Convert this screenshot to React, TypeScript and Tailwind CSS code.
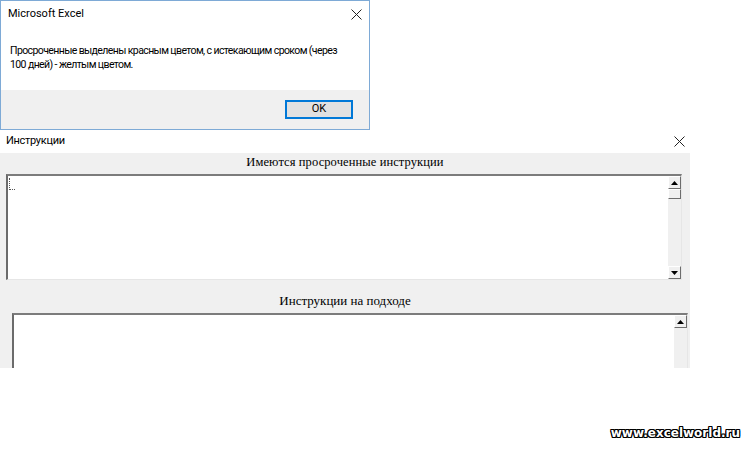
import React from "react";

function CloseIcon({ className }: { className?: string }) {
  return (
    <svg width="11" height="11" viewBox="0 0 11 11" className={className}>
      <path d="M0.5 0.5L10.5 10.5M10.5 0.5L0.5 10.5" stroke="#222" strokeWidth="1" fill="none" />
    </svg>
  );
}

function ScrollButton({ dir }: { dir: "up" | "down" }) {
  return (
    <div className="flex h-[13px] w-[13px] items-center justify-center border-t border-l border-t-white border-l-white border-r border-b border-r-[#6d6d6d] border-b-[#6d6d6d] bg-[#f0f0f0]">
      <svg width="7" height="4" viewBox="0 0 7 4">
        {dir === "up" ? <path d="M0 4L3.5 0L7 4Z" fill="#000" /> : <path d="M0 0L3.5 4L7 0Z" fill="#000" />}
      </svg>
    </div>
  );
}

function ListBox({ height, thumb, className }: { height: string; thumb: boolean; className: string }) {
  return (
    <div className={`flex shrink-0 border-t-2 border-l-2 border-t-[#7c7c7c] border-l-[#6b6b6b] border-r border-b border-r-[#e6e6e6] border-b-[#e6e6e6] bg-white ${height} ${className}`}>
      <div className="relative flex-1">
        {thumb && (
          <div className="absolute left-[1px] top-[2px] h-[12px] w-[6px] border-l border-b border-dotted border-[#555]" />
        )}
      </div>
      <div className="flex w-[13px] flex-col justify-between bg-[#f0f0f0]">
        <div className="flex flex-col">
          <ScrollButton dir="up" />
          {thumb && (
            <div className="h-[10px] w-[13px] border-t border-l border-t-white border-l-white border-r border-b border-r-[#6d6d6d] border-b-[#6d6d6d] bg-[#f0f0f0]" />
          )}
        </div>
        {thumb && <ScrollButton dir="down" />}
      </div>
    </div>
  );
}

export default function App() {
  return (
    <div className="relative h-[451px] w-[750px] overflow-hidden bg-white font-['Roboto','Liberation_Sans',sans-serif] text-[#000]">
      {/* message box */}
      <div className="flex h-[130px] w-[370px] flex-col border border-[#7eaad6] bg-white">
        <div className="flex h-[27px] items-center justify-between pl-[7px] pr-[7px] text-[11px]">
          <span>Microsoft Excel</span>
          <CloseIcon />
        </div>
        <div className="h-[62px] whitespace-nowrap pl-[9px] pt-[16px] text-[10.5px] leading-[14px] tracking-[-0.6px]">
          Просроченные выделены красным цветом, с истекающим сроком (через
          <br />
          100 дней) - желтым цветом.
        </div>
        <div className="flex flex-1 items-start justify-end bg-[#f0f0f0] pr-[16px] pt-[10px]">
          <button className="flex h-[19px] w-[68px] items-center justify-center border border-[#0078d7] bg-[#e1e1e1] text-[11px] shadow-[inset_0_0_0_1px_#0078d7]">
            OK
          </button>
        </div>
      </div>

      {/* instructions form */}
      <div className="flex w-[690px] flex-col">
        <div className="flex h-[23px] items-center justify-between pl-[6px] pr-[5px] text-[11px] tracking-[-0.3px]">
          <span>Инструкции</span>
          <CloseIcon />
        </div>
        <div className="flex h-[215px] flex-col overflow-hidden bg-[#f0f0f0] font-['Liberation_Serif','Times_New_Roman',serif]">
          <div className="mb-[4px] mt-[1px] h-[16px] text-center text-[12.5px] leading-[16px] tracking-[0.1px]">
            Имеются просроченные инструкции
          </div>
          <ListBox height="h-[106px]" thumb={true} className="ml-[6px] w-[676px]" />
          <div className="mb-[4px] mt-[13px] h-[16px] text-center text-[13px] leading-[16px]">
            Инструкции на подходе
          </div>
          <ListBox height="h-[80px]" thumb={false} className="ml-[12px] w-[676px]" />
        </div>
      </div>

      <div className="absolute bottom-[9px] right-[10px] font-['DejaVu_Sans',Verdana,sans-serif] text-[12px] font-bold text-white [text-shadow:1px_0_0_#000,-1px_0_0_#000,0_1px_0_#000,0_-1px_0_#000,1px_1px_0_#000,-1px_-1px_0_#000,1px_-1px_0_#000,-1px_1px_0_#000]">
        www.excelworld.ru
      </div>
    </div>
  );
}
